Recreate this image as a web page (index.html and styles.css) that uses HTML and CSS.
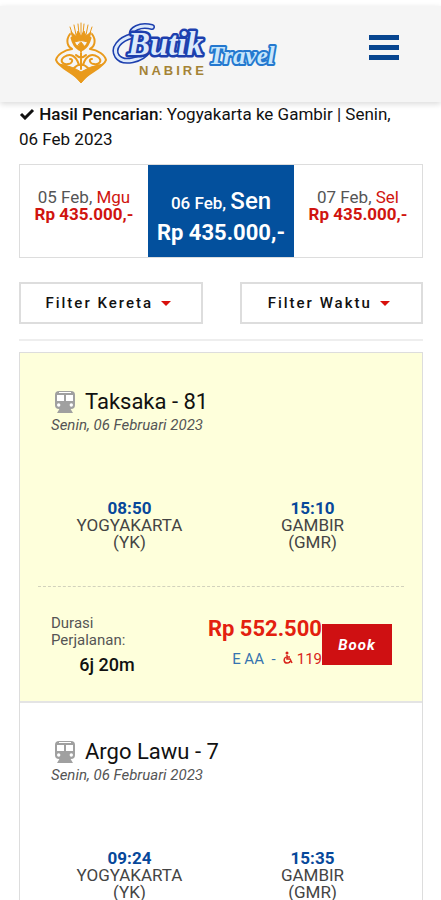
FILE: index.html
```
<!DOCTYPE html>
<html lang="id">
<head>
	<meta charset="UTF-8">
	<meta name="viewport" content="width=device-width, initial-scale=1.0">
	<title>Butik Travel Nabire</title>
	<link rel="stylesheet" href="styles.css">
</head>
<body>

	<svg class="sprite" aria-hidden="true">
		<symbol id="train" viewBox="0 0 22 24">
			<rect x="1" y="1" width="20" height="18" rx="4" fill="#a0a0a0"/>
			<path d="M5 2.5H17" stroke="#fff" stroke-width="1"/>
			<path d="M3 5H10V11H3ZM12 5H19V11H12Z" fill="#fff"/>
			<circle cx="4.700" cy="15" r="1.700" fill="#fff"/>
			<circle cx="17.300" cy="15" r="1.700" fill="#fff"/>
			<path d="M6 18H16L19 23H3Z" fill="#a0a0a0"/>
		</symbol>
	</svg>

	<header class="header">
		<a href="#" class="logo" aria-label="Butik Travel Nabire">
			<svg width="228" height="64" viewBox="0 0 228 64">
				<g fill="none" stroke="#e99a1c" stroke-linecap="round" stroke-linejoin="round">
					<path d="M19 14L16 5M22 13L20 3M25 12L24 2M27 12V1M29 12L30 2M32 13L34 3M35 14L38 5" stroke-width="1"/>
					<path d="M17 10L20 20Q27 17 34 20L37 10L32 14L30 9L27 14L24 9L22 14Z" fill="#e99a1c" stroke-width="1"/>
					<path d="M16 12C11 19 14 25 18 27C10 28 3 33 2 38C4 45 18 50 27 59C36 50 50 45 52 38C51 33 44 28 36 27C40 25 43 19 38 12" stroke-width="2"/>
					<path d="M18 16Q20 24 25 27M36 16Q34 24 29 27" stroke-width="3"/>
					<path d="M27 20L31 25L27 30L23 25Z" fill="#e99a1c"/>
					<path d="M25 43C22 33 16 31 10 35C5 39 9 43 14 42C18 42 20 37 16 37M29 43C32 33 38 31 44 35C49 39 45 43 40 42C36 42 34 37 38 37" stroke-width="2"/>
					<path d="M27 31V47M22 33Q27 38 32 33M20 46Q27 39 34 46" stroke-width="2"/>
					<path d="M5 42Q18 44 27 50Q36 44 49 42L36 51L27 61L18 51Z" fill="#e99a1c" stroke-width="1"/>
				</g>
				<path d="M98 5C86 2 76 7 78 14C66 17 58 26 63 34C69 43 88 38 94 29" fill="none" stroke="#1d3fae" stroke-width="6" stroke-linecap="round"/>
				<path d="M98 5C86 2 76 7 78 14C66 17 58 26 63 34C69 43 88 38 94 29" fill="none" stroke="#dce9fb" stroke-width="3" stroke-linecap="round"/>
				<text x="74" y="33" class="logo-butik">Butik</text>
				<text x="155" y="42" class="logo-travel">Travel</text>
				<text x="85" y="53" class="logo-nabire">NABIRE</text>
			</svg>
		</a>
		<button type="button" class="menu" aria-label="Menu">
			<span></span>
			<span></span>
			<span></span>
		</button>
	</header>

	<main class="content">
		<p class="result">
			<svg class="check" viewBox="0 0 16 12" aria-hidden="true"><path d="M2 6L6 10L14 2" fill="none" stroke="#111" stroke-width="3"/></svg>
			<b>Hasil Pencarian</b>: Yogyakarta ke Gambir | Senin, 06 Feb 2023
		</p>

		<nav class="dates">
			<a href="#" class="date">
				<span>05 Feb, <span class="day">Mgu</span></span>
				<b>Rp 435.000,-</b>
			</a>
			<a href="#" class="date active">
				<span>06 Feb, <span class="day">Sen</span></span>
				<b>Rp 435.000,-</b>
			</a>
			<a href="#" class="date">
				<span>07 Feb, <span class="day">Sel</span></span>
				<b>Rp 435.000,-</b>
			</a>
		</nav>

		<div class="filters">
			<button type="button" class="filter">Filter Kereta <span class="caret"></span></button>
			<button type="button" class="filter">Filter Waktu <span class="caret"></span></button>
		</div>

		<section class="trains">
			<article class="train selected">
				<div class="train-head">
					<h2><svg class="train-icon" aria-hidden="true"><use href="#train"/></svg>Taksaka - 81</h2>
					<p>Senin, 06 Februari 2023</p>
				</div>
				<div class="route">
					<p><b>08:50</b>YOGYAKARTA<br>(YK)</p>
					<p><b>15:10</b>GAMBIR<br>(GMR)</p>
				</div>
				<div class="train-foot">
					<div class="duration">
						<p>Durasi Perjalanan:</p>
						<strong>6j 20m</strong>
					</div>
					<div class="price">
						<strong>Rp 552.500</strong>
						<p>E AA &nbsp;- &nbsp;<span class="seats"><svg class="seat" viewBox="0 0 10 13" aria-hidden="true"><circle cx="4" cy="2" r="1.500" fill="#d8251c"/><path d="M4 4V8H7L9 12M4 6H7M3 6C0 8 1 12 4 12C6 12 7 11 7 10" fill="none" stroke="#d8251c" stroke-width="1.500"/></svg> 119</span></p>
					</div>
					<button type="button" class="book">Book</button>
				</div>
			</article>

			<article class="train">
				<div class="train-head">
					<h2><svg class="train-icon" aria-hidden="true"><use href="#train"/></svg>Argo Lawu - 7</h2>
					<p>Senin, 06 Februari 2023</p>
				</div>
				<div class="route">
					<p><b>09:24</b>YOGYAKARTA<br>(YK)</p>
					<p><b>15:35</b>GAMBIR<br>(GMR)</p>
				</div>
			</article>
		</section>
	</main>

</body>
</html>
```
FILE: styles.css
```
*{
	box-sizing: border-box;
}

body{
	margin: 0;
	padding-top: 6px;
	background: #fff;
	color: #111;
	font-family: Roboto, "Liberation Sans", sans-serif;
	font-size: 17px;
}

h2, p{
	margin: 0;
}

a{
	color: inherit;
	text-decoration: none;
}

button{
	font-family: inherit;
	cursor: pointer;
}

.sprite{
	display: none;
}

.header{
	display: flex;
	justify-content: space-between;
	align-items: flex-start;
	height: 96px;
	padding: 16px 42px 0 54px;
	background: #f5f5f5;
	box-shadow: 0 2px 6px rgba(0, 0, 0, 0.15);
}

.logo svg{
	display: block;
}

.logo-butik,
.logo-travel{
	font-family: "Liberation Serif", serif;
	font-style: italic;
	font-weight: 700;
	paint-order: stroke;
	stroke-linejoin: round;
}

.logo-butik{
	font-size: 33px;
	fill: #dce9fb;
	stroke: #1d3fae;
	stroke-width: 5px;
}

.logo-travel{
	font-size: 25px;
	fill: #c8e6fb;
	stroke: #2478cf;
	stroke-width: 4px;
}

.logo-nabire{
	font-family: "Liberation Sans", sans-serif;
	font-size: 13px;
	font-weight: 700;
	letter-spacing: 3px;
	fill: #a48336;
}

.menu{
	display: flex;
	flex-direction: column;
	gap: 5px;
	margin-top: 13px;
	padding: 0;
	border: 0;
	background: none;
}

.menu span{
	width: 30px;
	height: 5px;
	background: #07458f;
}

.content{
	padding: 0 18px 0 19px;
}

.result{
	padding-right: 16px;
	line-height: 25px;
}

.result b{
	font-weight: 500;
}

.check{
	width: 16px;
	height: 12px;
}

.dates{
	display: grid;
	grid-template-columns: 1fr 146px 1fr;
	margin-top: 12px;
	border: 1px solid #ddd;
}

.date{
	display: flex;
	flex-direction: column;
	align-items: center;
	height: 92px;
	padding-top: 24px;
	color: #555;
	line-height: 17px;
}

.date b,
.date .day{
	color: #d0140f;
}

.date.active{
	padding-top: 21px;
	background: #03509d;
	color: #fff;
	font-weight: 500;
	line-height: 30px;
}

.date.active b,
.date.active .day{
	color: #fff;
	font-size: 22px;
}

.date.active .day{
	font-size: 24px;
}

.filters{
	display: flex;
	justify-content: space-between;
	gap: 37px;
	margin-top: 24px;
	padding-bottom: 15px;
	border-bottom: 2px solid #eee;
}

.filter{
	display: flex;
	flex: 1;
	justify-content: center;
	align-items: center;
	gap: 8px;
	height: 42px;
	padding: 0 5px 0 0;
	border: 2px solid #ddd;
	background: #fff;
	color: #111;
	font-size: 15px;
	font-weight: 500;
	letter-spacing: 2px;
}

.caret{
	border: 5px solid transparent;
	border-top-color: #d8100c;
	border-bottom: 0;
}

.trains{
	margin-top: 11px;
	border: 1px solid #ddd;
}

.train{
	height: 350px;
	padding: 36px 18px 0;
	border-bottom: 2px solid #e4e4e4;
}

.train.selected{
	background: #feffdb;
}

.train-head{
	padding-left: 13px;
}

.train-head h2{
	display: flex;
	align-items: center;
	gap: 9px;
	padding-left: 3px;
	font-size: 22px;
	font-weight: 400;
	line-height: 26px;
}

.train-head p{
	color: #555;
	font-size: 15px;
	font-style: italic;
	line-height: 20px;
}

.train-icon{
	width: 22px;
	height: 24px;
}

.route{
	display: grid;
	grid-template-columns: 1fr 1fr;
	margin-top: 65px;
	padding-bottom: 35px;
	border-bottom: 1px dashed #d2d2bc;
	color: #444;
	font-size: 17px;
	line-height: 17px;
	text-align: center;
}

.route b{
	display: block;
	color: #07489a;
}

.train:not(.selected) .route{
	border-color: #ddd;
}

.train-foot{
	display: flex;
	padding: 28px 12px 0 13px;
}

.duration{
	width: 112px;
}

.duration p{
	width: 90px;
	color: #555;
	font-size: 15px;
	line-height: 17px;
}

.duration strong{
	display: block;
	margin-top: 6px;
	font-size: 18px;
	font-weight: 500;
	line-height: 20px;
	text-align: center;
}

.price{
	flex: 1;
	color: #e3200f;
	text-align: right;
}

.price strong{
	display: block;
	font-size: 22px;
	line-height: 28px;
}

.price p{
	margin-top: 6px;
	color: #3674b0;
	font-size: 15px;
	line-height: 20px;
}

.seats{
	color: #d8251c;
}

.seat{
	width: 10px;
	height: 13px;
}

.book{
	width: 70px;
	height: 41px;
	margin-top: 9px;
	padding: 0;
	border: 0;
	background: #cf1012;
	color: #fff;
	font-size: 15px;
	font-style: italic;
	font-weight: 700;
	letter-spacing: 1px;
}
```
